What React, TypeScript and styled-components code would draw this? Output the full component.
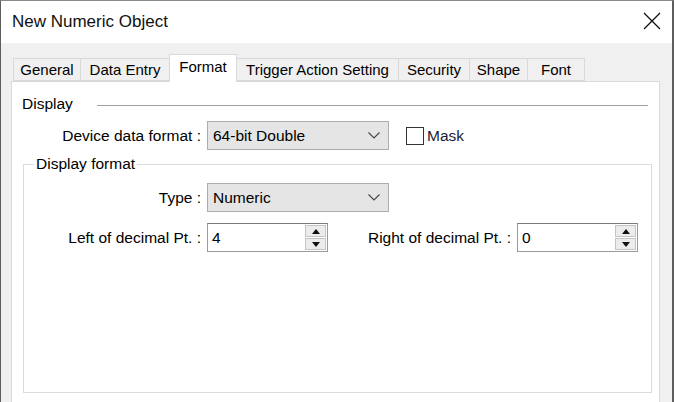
import styled, { createGlobalStyle } from "styled-components";

const GlobalStyle = createGlobalStyle`
  html, body {
    margin: 0;
    padding: 0;
    width: 674px;
    height: 402px;
    overflow: hidden;
    background: #f0f0f0;
  }
  * {
    box-sizing: border-box;
  }
`;

const tabs = [
  { label: "General", width: 68 },
  { label: "Data Entry", width: 90 },
  { label: "Format", width: 68, active: true },
  { label: "Trigger Action Setting", width: 163 },
  { label: "Security", width: 72 },
  { label: "Shape", width: 59 },
  { label: "Font", width: 58 },
];

export default function App() {
  return (
    <>
      <GlobalStyle />
      <Window>
        <TitleBar>
          <Title>New Numeric Object</Title>
          <CloseIcon width="18" height="18" viewBox="0 0 18 18">
            <path d="M1 1 L17 17 M17 1 L1 17" stroke="#111" strokeWidth="1.3" fill="none" />
          </CloseIcon>
        </TitleBar>

        <Body>
          <TabRow>
            {tabs.map((t) => (
              <Tab key={t.label} $w={t.width} $active={!!t.active}>
                {t.label}
              </Tab>
            ))}
          </TabRow>

          <Panel>
            <SectionHeader>
              <SectionTitle>Display</SectionTitle>
              <SectionLine />
            </SectionHeader>

            <FormRow>
              <FieldLabel $w={178}>Device data format :</FieldLabel>
              <Combo>
                <ComboText>64-bit Double</ComboText>
                <Chevron />
              </Combo>
              <CheckWrap>
                <CheckBox />
                <CheckText>Mask</CheckText>
              </CheckWrap>
            </FormRow>

            <Group>
              <GroupLegend>Display format</GroupLegend>
              <FormRow $top={10}>
                <FieldLabel $w={177}>Type :</FieldLabel>
                <Combo>
                  <ComboText>Numeric</ComboText>
                  <Chevron />
                </Combo>
              </FormRow>
              <FormRow $top={11}>
                <FieldLabel $w={177}>Left of decimal Pt. :</FieldLabel>
                <Spinner value="4" width={121} />
                <FieldLabel $w={183}>Right of decimal Pt. :</FieldLabel>
                <Spinner value="0" width={121} />
              </FormRow>
            </Group>
          </Panel>
        </Body>
      </Window>
    </>
  );
}

const Chevron = () => (
  <svg width="12" height="7" viewBox="0 0 12 7">
    <path d="M0.5 0.5 L6 6 L11.5 0.5" stroke="#444" strokeWidth="1.1" fill="none" />
  </svg>
);

const Spinner = ({ value, width }: { value: string; width: number }) => (
  <SpinBox style={{ width }}>
    <SpinText>{value}</SpinText>
    <SpinButtons>
      <SpinBtn>
        <svg width="8" height="5" viewBox="0 0 8 5">
          <path d="M0 5 L4 0 L8 5 Z" fill="#111" />
        </svg>
      </SpinBtn>
      <SpinBtn>
        <svg width="8" height="5" viewBox="0 0 8 5">
          <path d="M0 0 L8 0 L4 5 Z" fill="#111" />
        </svg>
      </SpinBtn>
    </SpinButtons>
  </SpinBox>
);

const Window = styled.div`
  width: 674px;
  height: 402px;
  display: flex;
  flex-direction: column;
  border-top: 1px solid #8a8a8a;
  border-left: 1px solid #5e5e5e;
  border-right: 2px solid #5e5e5e;
  font-family: "Liberation Sans", Arial, sans-serif;
  font-size: 15.5px;
  color: #000;
  overflow: hidden;
`;

const TitleBar = styled.div`
  height: 42px;
  flex-shrink: 0;
  background: #fff;
  display: flex;
  align-items: center;
  justify-content: space-between;
  padding: 0 11px 0 11px;
`;

const Title = styled.div`
  font-size: 17px;
  color: #111;
  margin-top: -1px;
`;

const CloseIcon = styled.svg`
  display: block;
  margin-top: -2px;
`;

const Body = styled.div`
  flex: 1;
  display: flex;
  flex-direction: column;
  background: #f0f0f0;
  padding: 11px 12px 0 10px;
  min-height: 0;
`;

const TabRow = styled.div`
  height: 27px;
  display: flex;
  align-items: flex-end;
  padding-left: 2px;
  position: relative;
  z-index: 1;
  flex-shrink: 0;
`;

const Tab = styled.div<{ $w: number; $active: boolean }>`
  width: ${(p) => p.$w}px;
  height: ${(p) => (p.$active ? 28 : 23)}px;
  margin-bottom: ${(p) => (p.$active ? -1 : 0)}px;
  margin-left: -1px;
  display: flex;
  align-items: center;
  justify-content: center;
  padding-bottom: ${(p) => (p.$active ? 5 : 0)}px;
  background: ${(p) => (p.$active ? "#fff" : "#f0f0f0")};
  border: 1px solid #d9d9d9;
  border-bottom: ${(p) => (p.$active ? "none" : "1px solid #d9d9d9")};
  white-space: nowrap;
  font-size: 15px;
  z-index: ${(p) => (p.$active ? 2 : 0)};
  position: relative;
  &:first-child {
    margin-left: 0;
  }
`;

const Panel = styled.div`
  flex: 1;
  display: flex;
  flex-direction: column;
  background: #fff;
  border: 1px solid #d9d9d9;
  border-bottom: none;
  padding: 12px 7px 9px 11px;
  min-height: 0;
`;

const SectionHeader = styled.div`
  height: 20px;
  display: flex;
  align-items: center;
`;

const SectionTitle = styled.span`
  margin-left: -1px;
`;

const SectionLine = styled.div`
  flex: 1;
  height: 1px;
  background: #a0a0a0;
  margin: 2px 4px 0 24px;
`;

const FormRow = styled.div<{ $top?: number }>`
  height: 29px;
  margin-top: ${(p) => p.$top ?? 7}px;
  display: flex;
  align-items: center;
  flex-shrink: 0;
`;

const FieldLabel = styled.div<{ $w: number }>`
  width: ${(p) => p.$w}px;
  text-align: right;
  margin-right: 6px;
  white-space: nowrap;
  flex-shrink: 0;
`;

const Combo = styled.div`
  width: 182px;
  height: 29px;
  display: flex;
  align-items: center;
  justify-content: space-between;
  background: #e5e5e5;
  border: 1px solid #adadad;
  padding: 0 8px 0 5px;
`;

const ComboText = styled.span`
  color: #000;
`;

const CheckWrap = styled.label`
  display: flex;
  align-items: center;
  margin-left: 17px;
  gap: 3px;
`;

const CheckBox = styled.span`
  width: 18px;
  height: 18px;
  border: 1px solid #333;
  background: #fff;
`;

const CheckText = styled.span`
  color: #1b1b3a;
`;

const Group = styled.fieldset`
  flex: 1;
  margin: 5px 0 0 0;
  padding: 0;
  border: 1px solid #dcdcdc;
  min-width: 0;
  display: flex;
  flex-direction: column;
`;

const GroupLegend = styled.legend`
  margin-left: 10px;
  padding: 0 2px;
  font-size: 15.5px;
  line-height: 18px;
`;

const SpinBox = styled.div`
  height: 29px;
  display: flex;
  align-items: stretch;
  background: #fff;
  border: 1px solid #9a9a9a;
  border-top-color: #7a7a7a;
  padding: 1px;
  flex-shrink: 0;
`;

const SpinText = styled.div`
  flex: 1;
  display: flex;
  align-items: center;
  padding-left: 3px;
`;

const SpinButtons = styled.div`
  width: 21px;
  display: flex;
  flex-direction: column;
  gap: 1px;
`;

const SpinBtn = styled.div`
  flex: 1;
  display: flex;
  align-items: center;
  justify-content: center;
  background: #ececec;
  border: 1px solid #c4c4c4;
`;
